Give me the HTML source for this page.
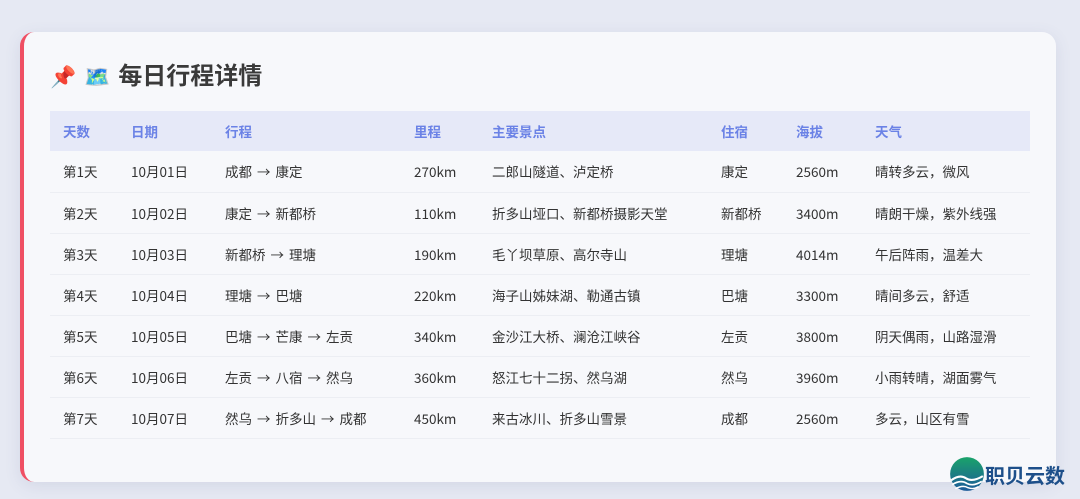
<!DOCTYPE html>
<html><head><meta charset="utf-8"><style>
*{margin:0;padding:0;box-sizing:border-box}
body{width:1080px;height:499px;background:#e6e9f3;font-family:"Noto Sans CJK SC","Liberation Sans",sans-serif;position:relative;overflow:hidden}
.card{position:absolute;left:20px;top:32px;width:1036px;height:450px;background:#f7f8fb;border-radius:14px;border-left:4px solid #ef4f63;box-shadow:0 4px 16px rgba(80,90,140,.12)}
h1{position:absolute;left:26px;top:24px;font-size:24px;font-weight:bold;color:#3a3a3a;white-space:nowrap}
h1 i{font-style:normal;font-size:21px;margin-right:8px}
table{position:absolute;left:26px;top:79px;width:980px;border-collapse:collapse;font-size:13.5px;color:#333}
th{background:#e6e9f8;color:#6b82e6;font-weight:bold;text-align:left;height:40px;padding-left:13px}
td{height:41px;padding-left:13px;border-bottom:1px solid #eceef3;vertical-align:middle}
td b{font-weight:normal;margin:0 5px}
.logo{position:absolute;left:949px;top:455px;display:flex;align-items:center}
.logo span{font-size:20px;font-weight:bold;color:#1d4f8a;margin-left:0}
</style></head><body>
<div class="card">
<h1><i>📌</i><i>🗺️</i>每日行程详情</h1>
<table>
<tr><th style="width:68px">天数</th><th style="width:94px">日期</th><th style="width:189px">行程</th><th style="width:78px">里程</th><th style="width:229px">主要景点</th><th style="width:75px">住宿</th><th style="width:79px">海拔</th><th>天气</th></tr>
<tr><td>第1天</td><td>10月01日</td><td>成都<b>→</b>康定</td><td>270km</td><td>二郎山隧道、泸定桥</td><td>康定</td><td>2560m</td><td>晴转多云，微风</td></tr>
<tr><td>第2天</td><td>10月02日</td><td>康定<b>→</b>新都桥</td><td>110km</td><td>折多山垭口、新都桥摄影天堂</td><td>新都桥</td><td>3400m</td><td>晴朗干燥，紫外线强</td></tr>
<tr><td>第3天</td><td>10月03日</td><td>新都桥<b>→</b>理塘</td><td>190km</td><td>毛丫坝草原、高尔寺山</td><td>理塘</td><td>4014m</td><td>午后阵雨，温差大</td></tr>
<tr><td>第4天</td><td>10月04日</td><td>理塘<b>→</b>巴塘</td><td>220km</td><td>海子山姊妹湖、勒通古镇</td><td>巴塘</td><td>3300m</td><td>晴间多云，舒适</td></tr>
<tr><td>第5天</td><td>10月05日</td><td>巴塘<b>→</b>芒康<b>→</b>左贡</td><td>340km</td><td>金沙江大桥、澜沧江峡谷</td><td>左贡</td><td>3800m</td><td>阴天偶雨，山路湿滑</td></tr>
<tr><td>第6天</td><td>10月06日</td><td>左贡<b>→</b>八宿<b>→</b>然乌</td><td>360km</td><td>怒江七十二拐、然乌湖</td><td>然乌</td><td>3960m</td><td>小雨转晴，湖面雾气</td></tr>
<tr><td>第7天</td><td>10月07日</td><td>然乌<b>→</b>折多山<b>→</b>成都</td><td>450km</td><td>来古冰川、折多山雪景</td><td>成都</td><td>2560m</td><td>多云，山区有雪</td></tr>
</table>
</div>
<div class="logo">
<svg width="36" height="38" viewBox="0 0 34 36"><defs><linearGradient id="g" x1="0" y1="0" x2="0" y2="1"><stop offset="0" stop-color="#1aa36a"/><stop offset="1" stop-color="#1d5a9a"/></linearGradient></defs><circle cx="17" cy="18" r="16" fill="url(#g)"/><path d="M2 24 Q10 18 16 22 Q22 26 32 20" stroke="#fff" stroke-width="2" fill="none"/><path d="M3 28 Q11 23 17 27 Q23 30 31 25" stroke="#fff" stroke-width="1.6" fill="none"/><path d="M6 32 Q13 28 18 31 Q23 33 28 30" stroke="#fff" stroke-width="1.4" fill="none"/></svg>
<span>职贝云数</span></div>
</body></html>
